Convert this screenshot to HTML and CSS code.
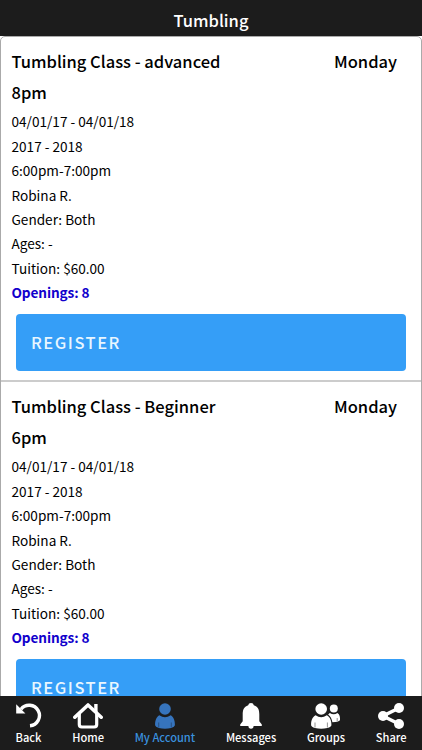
FILE: index.html
```
<!DOCTYPE html>
<html lang="en">
<head>
    <meta charset="UTF-8">
    <meta name="viewport" content="width=device-width, initial-scale=1.0">
    <title>Tumbling</title>
    <link rel="stylesheet" href="styles.css">
</head>
<body>
    <header class="topbar">
        <h1>Tumbling</h1>
    </header>

    <main class="content">
        <ul class="class-list">
            <li class="class-item">
                <div class="heading">
                    <h2>Tumbling Class - advanced 8pm</h2>
                    <span class="day">Monday</span>
                </div>
                <p>04/01/17 - 04/01/18</p>
                <p>2017 - 2018</p>
                <p>6:00pm-7:00pm</p>
                <p>Robina R.</p>
                <p>Gender: Both</p>
                <p>Ages: -</p>
                <p>Tuition: $60.00</p>
                <p class="openings">Openings: 8</p>
                <button class="register">REGISTER</button>
            </li>
            <li class="class-item">
                <div class="heading">
                    <h2>Tumbling Class - Beginner 6pm</h2>
                    <span class="day">Monday</span>
                </div>
                <p>04/01/17 - 04/01/18</p>
                <p>2017 - 2018</p>
                <p>6:00pm-7:00pm</p>
                <p>Robina R.</p>
                <p>Gender: Both</p>
                <p>Ages: -</p>
                <p>Tuition: $60.00</p>
                <p class="openings">Openings: 8</p>
                <button class="register">REGISTER</button>
            </li>
        </ul>
    </main>

    <nav class="tabbar">
        <a class="tab">
            <svg width="26" height="26" viewBox="0 0 26 26">
                <path d="M5 6.2A10.3 10.3 0 1 1 14 22.8" fill="none" stroke="#fff" stroke-width="3.4"/>
                <path d="M0.2 1.2V10.4H9.4Z" fill="#fff"/>
            </svg>
            <span>Back</span>
        </a>
        <a class="tab">
            <svg width="30" height="26" viewBox="0 0 30 26">
                <path d="M1.8 14.2L15 2L28.2 14.2" fill="none" stroke="#fff" stroke-width="3.6" stroke-linecap="round" stroke-linejoin="round"/>
                <path d="M6.3 11V21.6Q6.3 24 8.7 24H21.3Q23.7 24 23.7 21.6V11" fill="none" stroke="#fff" stroke-width="3.2"/>
                <path d="M21.2 1H24.6V10.5L21.2 7.4Z" fill="#fff"/>
            </svg>
            <span>Home</span>
        </a>
        <a class="tab active">
            <svg width="20" height="26" viewBox="0 0 20 26">
                <g fill="#3674bd">
                    <circle cx="10" cy="6" r="5.8"/>
                    <path d="M4.3 12.2Q10 16.2 15.7 12.2C19 14 20 18 19.9 22.3Q19.7 24 16.2 25Q10 26.6 3.8 25Q.3 24 .1 22.3C0 18 1 14 4.3 12.2Z"/>
                </g>
                <path d="M3.7 19.5V24.5M16.3 19.5V24.5" stroke="#244873" stroke-width=".8"/>
            </svg>
            <span>My Account</span>
        </a>
        <a class="tab">
            <svg width="22" height="26" viewBox="0 0 22 26">
                <path d="M11 0Q13.5 0 13.8 2.2C18.3 3.8 19.3 7 19.3 11.5V18.2L21.8 21.5V23H13.6Q13.5 25.8 11 25.8Q8.5 25.8 8.4 23H.2V21.5L2.7 18.2V11.5C2.7 7 3.7 3.8 8.2 2.2Q8.5 0 11 0Z" fill="#fff"/>
            </svg>
            <span>Messages</span>
        </a>
        <a class="tab">
            <svg width="30" height="26" viewBox="0 0 30 26">
                <g fill="#fff">
                    <circle cx="10.2" cy="6" r="5.8"/>
                    <path d="M4.6 12.2Q10.2 16.2 15.8 12.2C19.4 14 20.5 18 20.4 22.3Q20.2 24 16.4 25Q10.2 26.6 4 25Q.3 24 .1 22.3C0 18 1 14 4.6 12.2Z"/>
                    <circle cx="22.8" cy="5.6" r="4"/>
                    <path d="M18.8 9.9Q22.8 12.6 26.4 9.9C28.8 11.2 29.2 14 29 17.2Q27.5 19 21.4 19.3C20.9 16 19.5 13.2 17.1 11.5Z"/>
                </g>
                <path d="M4 19.5V24.5M16.4 19.5V24.5M26.2 15V18.4" stroke="#777" stroke-width=".8"/>
            </svg>
            <span>Groups</span>
        </a>
        <a class="tab">
            <svg width="26" height="26" viewBox="0 0 26 26">
                <path d="M21 5L5 13L21 21" fill="none" stroke="#fff" stroke-width="3.6"/>
                <g fill="#fff">
                    <circle cx="21" cy="5" r="5"/>
                    <circle cx="5" cy="13" r="5"/>
                    <circle cx="21" cy="21" r="5"/>
                </g>
            </svg>
            <span>Share</span>
        </a>
    </nav>
</body>
</html>
```
FILE: styles.css
```
* {
    box-sizing: border-box;
}
body {
    display: flex;
    flex-direction: column;
    height: 100vh;
    margin: 0;
    overflow: hidden;
    font-family: "Noto Sans CJK JP", "Open Sans", sans-serif;
    font-size: 13.6px;
    color: #000;
    background-color: #fff;
}
h1, h2, p, ul {
    margin: 0;
    padding: 0;
}
/* Title bar */
.topbar {
    flex: none;
    height: 36px;
    padding-top: 5px;
    background-color: #1c1c1c;
    color: #fff;
    text-align: center;
}
h1 {
    font-size: 16.5px;
    font-weight: 500;
    line-height: 30px;
}
/* Class list */
.content {
    flex: 1;
    min-height: 0;
    overflow: hidden;
}
.class-list {
    list-style: none;
    border: 1px solid #aaa;
    border-radius: 5px;
}
.class-item {
    height: 345px;
    padding: 9px 15px 0 10.5px;
    border-bottom: 2px solid #ccc;
}
.heading {
    display: flex;
    justify-content: space-between;
    margin-bottom: 2px;
    padding-right: 9px;
    font-size: 16.5px;
    font-weight: 500;
    line-height: 30.7px;
}
h2 {
    width: 240px;
    font-size: inherit;
    font-weight: inherit;
}
.class-item p {
    line-height: 24.4px;
}
.class-item .openings {
    color: #1100cc;
    font-weight: 700;
    letter-spacing: -0.1px;
}
.register {
    display: block;
    width: 390px;
    height: 57px;
    margin: 9px 0 0 4.5px;
    padding: 0 15px;
    border: none;
    border-radius: 4px;
    background-color: #359ef7;
    color: #e8f6ff;
    font-family: inherit;
    font-size: 16.5px;
    font-weight: 500;
    letter-spacing: 1.5px;
    text-align: left;
}
/* Bottom tabs */
.tabbar {
    flex: none;
    display: flex;
    justify-content: space-between;
    height: 54px;
    padding: 7px 15.5px 0;
    background-color: #1c1c1c;
}
.tab {
    display: flex;
    flex-direction: column;
    align-items: center;
    color: #fff;
    font-size: 11.1px;
    font-weight: 500;
    line-height: 16px;
}
.tab.active {
    color: #3a91df;
}
```
